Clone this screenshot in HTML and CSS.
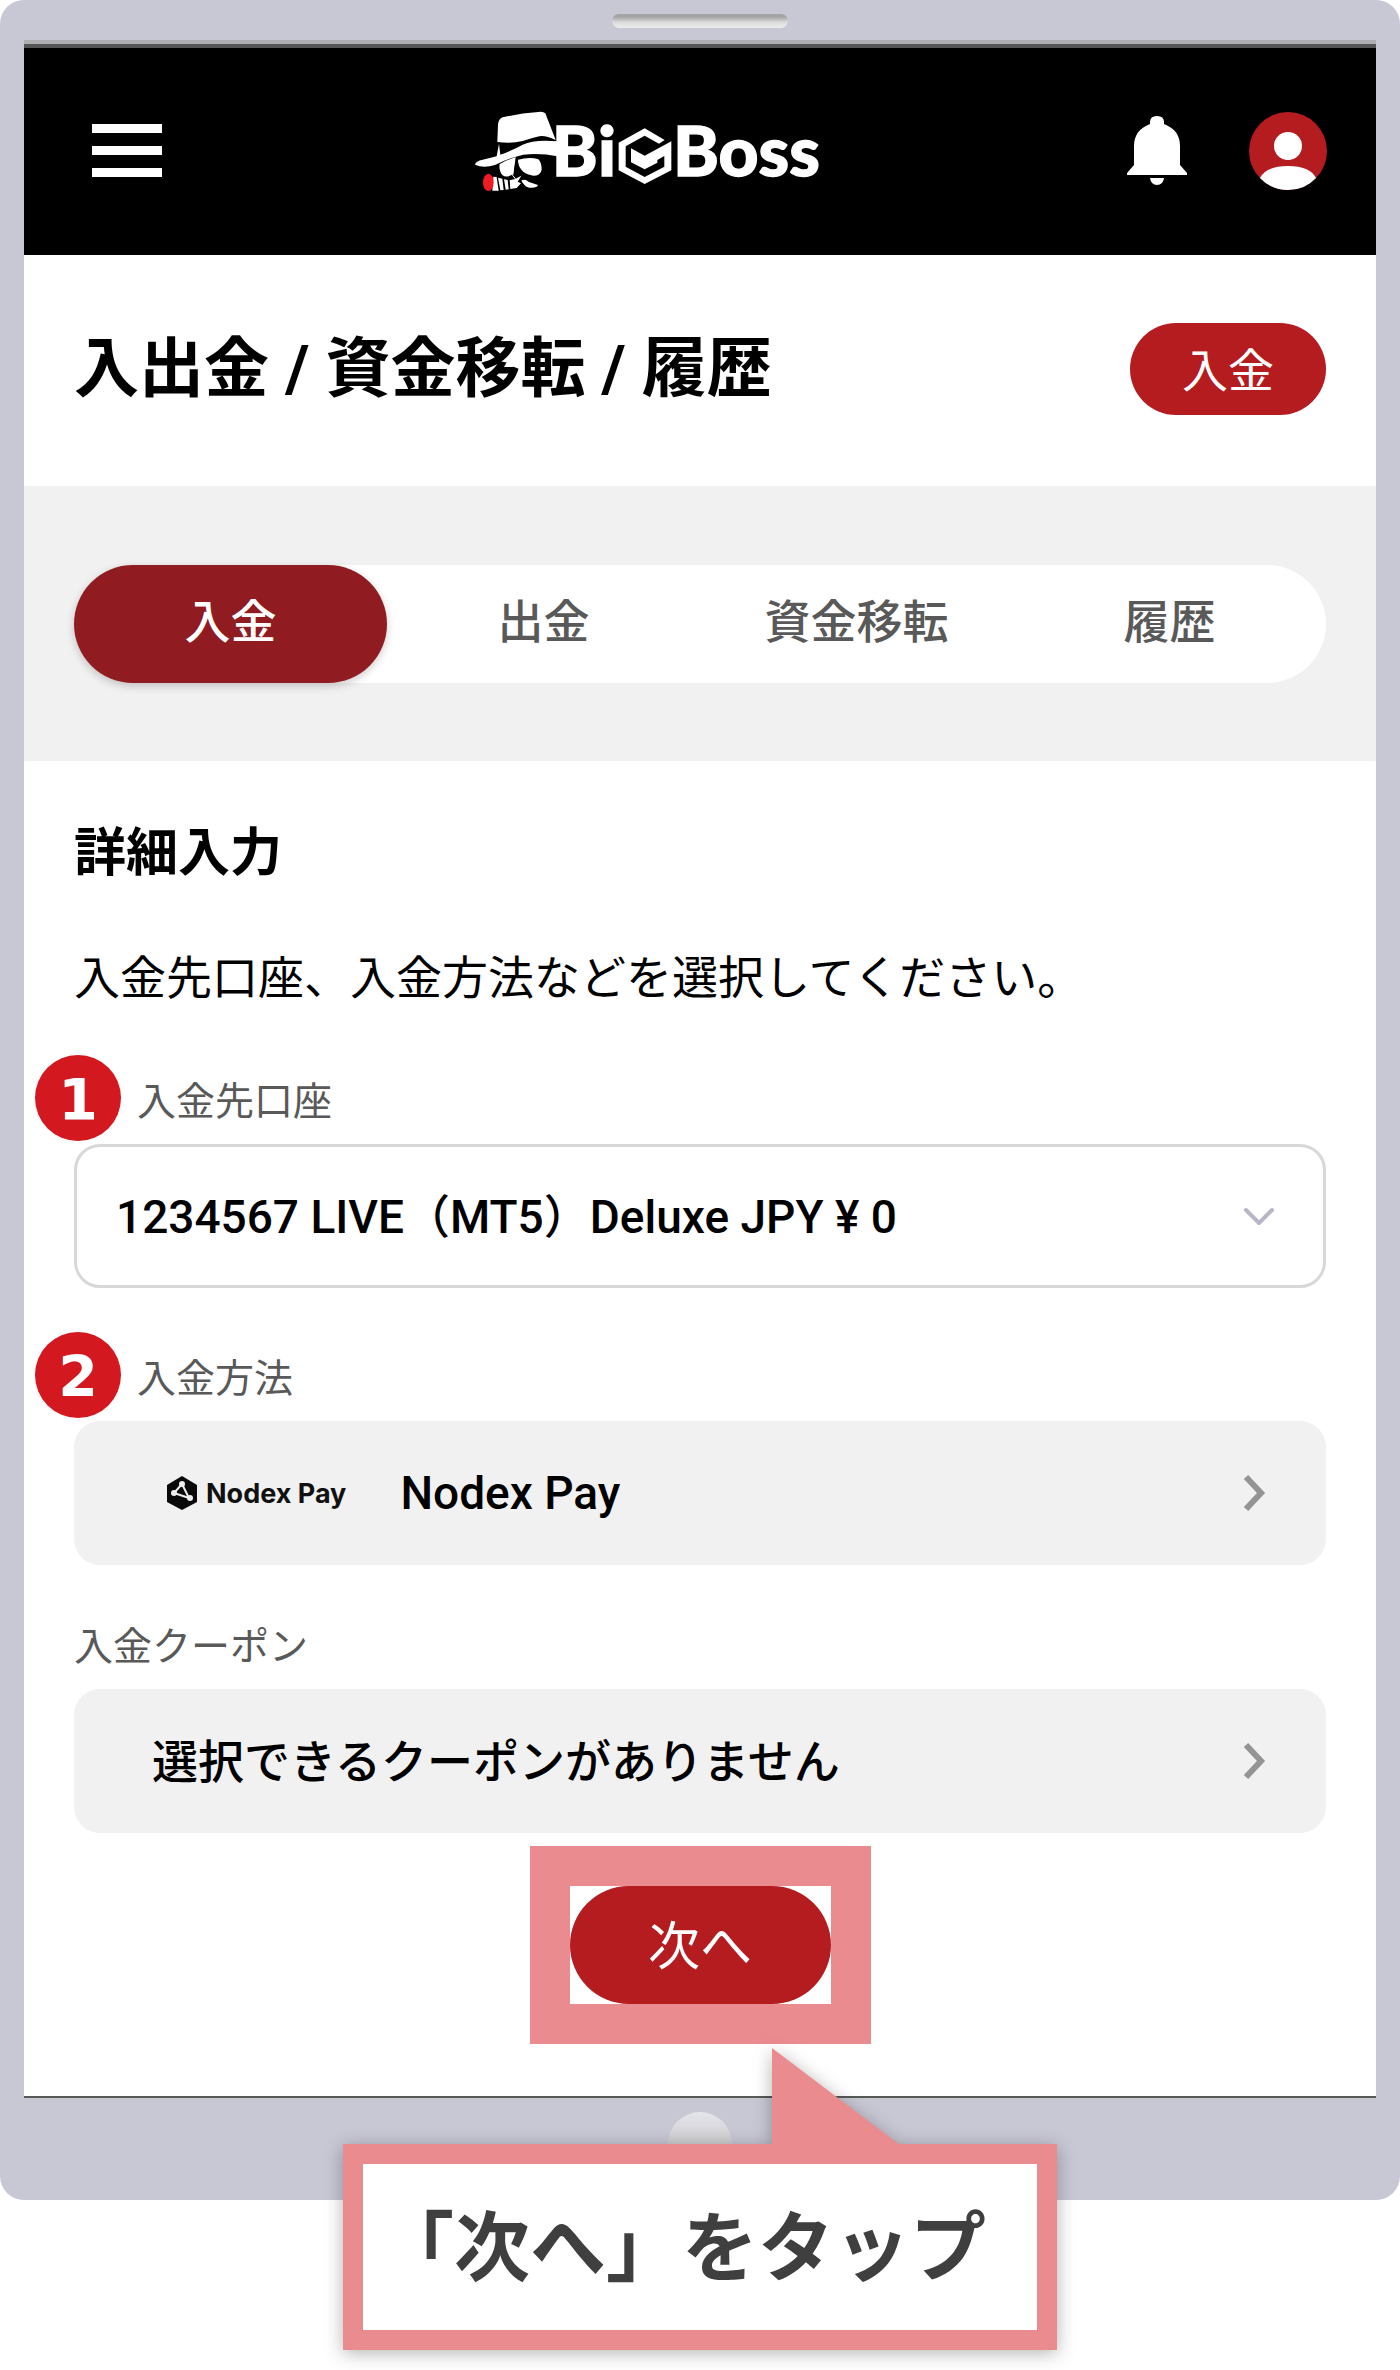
FILE: index.html
```html
<!DOCTYPE html>
<html lang="ja">
<head>
    <meta charset="UTF-8">
    <meta name="viewport" content="width=device-width, initial-scale=1.0">
    <title>入出金 / 資金移転 / 履歴</title>
    <link rel="stylesheet" href="styles.css">
</head>
<body>
    <div class="device">
        <div class="speaker"></div>
        <div class="screen">
            <header class="topbar">
                <button type="button" class="icon-button menu" aria-label="メニュー">
                    <span></span><span></span><span></span>
                </button>
                <a href="#" class="logo" aria-label="BigBoss">
                    <svg width="347" height="120" viewBox="45 0 1041 360">
                        <g fill="#fff">
                            <path d="M112 153 L114 100 Q116 84 128 79 Q180 67 235 63 Q250 61 256 67 L287 147 Q255 132 238 136 Q215 141 188 150 Q155 159 112 153Z"/>
                            <path d="M45 221 Q47 210 68 206 L110 196 L117 158 L121 191 Q160 177 188 161 Q225 144 292 151 L292 196 Q240 185 190 191 Q150 200 105 222 Q70 233 45 221Z"/>
                            <path d="M119 219 Q140 207 167 198 L160 248 Q140 263 127 252 Q116 240 119 219Z"/>
                            <path d="M174 206 Q210 196 235 205 Q245 214 245 236 Q242 254 220 254 Q194 251 183 235 Q174 223 174 206Z"/>
                            <path d="M100 257 L110 258 L116 299 L97 299Z M114 260 L127 263 L131 297 L121 298Z M132 265 L143 267 L146 295 L137 296Z M149 268 Q166 266 184 254 L173 272 L183 277 L170 291 L151 294Z"/>
                            <path d="M184 269 Q194 262 207 273 L234 282 Q231 292 208 290 Q194 287 184 269Z"/>
                            <path fill-rule="evenodd" d="M554 112 L614 147 L597 158 L554 134 L497 166 L497 227 L554 258 L613 227 L613 195 L592 207 L592 215 L554 235 L513 214 L513 172 L554 194 L634 151 L634 238 L554 279 L476 238 L476 155Z"/>
                        </g>
                        <path d="M163 203 L158 253 L168 266" fill="none" stroke="#fff" stroke-width="3"/>
                        <ellipse cx="85" cy="274" rx="16" ry="26" fill="#ed1c24"/>
                        <g class="logo-text">
                            <text x="275" y="255">B</text>
                            <text x="414" y="255">i</text>
                            <text x="639" y="255">Boss</text>
                        </g>
                    </svg>
                </a>
                <div class="topbar-actions">
                    <button type="button" class="icon-button" aria-label="お知らせ">
                        <svg width="60" height="70" viewBox="0 0 60 70" fill="#fff">
                            <path d="M23 9 V6 Q23 0 30 0 Q37 0 37 6 V8 Q53 14 53 30 V49 L60 57 V59 H0 V57 L7 49 V30 Q7 14 23 8Z"/>
                            <path d="M23 62 H37 Q36 69 30 69 Q24 69 23 62Z"/>
                        </svg>
                    </button>
                    <button type="button" class="icon-button" aria-label="アカウント">
                        <svg width="78" height="78" viewBox="0 0 78 78">
                            <circle cx="39" cy="39" r="39" fill="#b51c20"/>
                            <circle cx="39" cy="34" r="14" fill="#fff"/>
                            <path d="M11 66 Q17 54 39 54 Q61 54 67 66 Q56 78 39 78 Q22 78 11 66Z" fill="#fff"/>
                        </svg>
                    </button>
                </div>
            </header>

            <div class="page-head">
                <h1>入出金 / 資金移転 / 履歴</h1>
                <button type="button" class="pill small">入金</button>
            </div>

            <nav class="tab-area">
                <div class="tabs">
                    <button type="button" class="tab active">入金</button>
                    <button type="button" class="tab">出金</button>
                    <button type="button" class="tab">資金移転</button>
                    <button type="button" class="tab">履歴</button>
                </div>
            </nav>

            <form class="details">
                <h2>詳細入力</h2>
                <p>入金先口座、入金方法などを選択してください。</p>

                <div class="label-row">
                    <span class="badge">1</span>
                    <label for="account">入金先口座</label>
                </div>
                <div class="select-wrap">
                    <select id="account" class="field">
                        <option>1234567 LIVE（MT5）Deluxe JPY ¥ 0</option>
                    </select>
                    <svg class="select-arrow" width="32" height="20" viewBox="0 0 32 20">
                        <path d="M3 3 L16 16 L29 3" fill="none" stroke="#b8b6c6" stroke-width="4" stroke-linecap="round" stroke-linejoin="round"/>
                    </svg>
                </div>

                <div class="label-row">
                    <span class="badge">2</span>
                    <label for="method">入金方法</label>
                </div>
                <button type="button" id="method" class="field picker method">
                    <span class="pay-logo">
                        <svg width="32" height="34" viewBox="0 0 32 34">
                            <path d="M16 0 L31 9 V26 L16 34 L1 26 V9Z" fill="#0a0a0a"/>
                            <path d="M16 8 L8 17 L23 22Z" fill="none" stroke="#eee" stroke-width="2"/>
                            <circle cx="16" cy="8" r="3" fill="#eee"/>
                            <circle cx="8" cy="17" r="3" fill="#eee"/>
                            <circle cx="24" cy="22" r="3" fill="#eee"/>
                        </svg>
                        Nodex Pay
                    </span>
                    <span>Nodex Pay</span>
                    <svg class="arrow" width="24" height="40" viewBox="0 0 24 40">
                        <path d="M4 4 L19 20 L4 36" fill="none" stroke="#949494" stroke-width="6"/>
                    </svg>
                </button>

                <div class="label-row plain">
                    <label for="coupon">入金クーポン</label>
                </div>
                <button type="button" id="coupon" class="field picker">
                    <span class="note">選択できるクーポンがありません</span>
                    <svg class="arrow" width="24" height="40" viewBox="0 0 24 40">
                        <path d="M4 4 L19 20 L4 36" fill="none" stroke="#949494" stroke-width="6"/>
                    </svg>
                </button>

                <div class="highlight">
                    <button type="button" class="pill">次へ</button>
                </div>
            </form>
        </div>
        <div class="home"></div>
    </div>

    <div class="callout">「次へ」をタップ</div>
</body>
</html>
```

FILE: styles.css
```css
* {
    box-sizing: border-box;
}

body {
    margin: 0;
    padding-bottom: 20px;
    background-color: #fff;
    color: #000;
    font-family: Roboto, "Noto Sans CJK JP", sans-serif;
    font-size: 46px;
}

button, select {
    font-family: inherit;
    font-size: inherit;
    color: inherit;
    margin: 0;
    cursor: pointer;
}

/* tablet frame */
.device {
    background-color: #c8c7d4;
    border-radius: 24px;
    padding: 14px 24px 0;
}

.speaker {
    width: 176px;
    height: 14px;
    margin: 0 auto 12px;
    border-radius: 7px;
    background: linear-gradient(#a3a3a3 20%, #dcdcdc 60%, #ececec);
}

.screen {
    background-color: #fff;
    border-top: 4px solid #aeaeb2;
    border-bottom: 2px solid #565b58;
}

.home {
    width: 64px;
    height: 64px;
    margin: 14px auto 0;
    border-radius: 50%;
    background: linear-gradient(#e4e4ec, #cacaca 60%);
}

.device::after {
    content: "";
    display: block;
    height: 24px;
}

/* header */
.topbar {
    display: flex;
    justify-content: space-between;
    align-items: center;
    height: 211px;
    padding: 0 49px 2px 68px;
    background-color: #000;
    border-top: 4px solid #555;
}

.icon-button {
    padding: 0;
    border: none;
    background: none;
}

.icon-button svg, .logo svg {
    display: block;
}

.menu {
    display: flex;
    flex-direction: column;
    gap: 13px;
    width: 70px;
}

.menu span {
    height: 9px;
    background-color: #fff;
}

.logo {
    margin-left: 8px;
}

.logo-text {
    font-family: Lato, sans-serif;
    font-size: 208px;
    font-weight: 900;
    fill: #fff;
    stroke: #fff;
    stroke-width: 4px;
}

.topbar-actions {
    display: flex;
    align-items: center;
    gap: 62px;
}

/* page title */
.page-head {
    display: flex;
    justify-content: space-between;
    align-items: center;
    padding: 68px 50px 71px;
}

h1 {
    margin: 0;
    font-size: 65px;
    line-height: 92px;
    font-weight: 700;
}

.pill {
    display: block;
    width: 261px;
    height: 118px;
    padding: 0 0 5px;
    border: none;
    border-radius: 59px;
    background-color: #b51c20;
    color: #fff;
    font-size: 52px;
}

.pill.small {
    width: 196px;
    height: 92px;
    font-size: 46px;
}

/* tabs */
.tab-area {
    padding: 79px 50px 78px;
    background-color: #f1f1f1;
}

.tabs {
    display: flex;
    border-radius: 59px;
    background-color: #fff;
}

.tab {
    flex: 1;
    height: 118px;
    padding: 0 0 12px;
    border: none;
    border-radius: 59px;
    background: none;
    color: #595959;
    font-weight: 500;
}

.tab.active {
    background-color: #901c22;
    color: #fff;
    box-shadow: 0 3px 8px rgba(0, 0, 0, 0.2);
}

/* form */
.details {
    padding: 61px 50px 52px;
}

h2 {
    margin: 0 0 60px;
    font-size: 52px;
    line-height: 64px;
    font-weight: 700;
}

p {
    margin: 0 0 45px;
    line-height: 64px;
}

.label-row {
    display: flex;
    align-items: center;
    gap: 16px;
    height: 86px;
    margin: 44px 0 3px -39px;
    color: #595959;
    font-size: 39px;
}

.label-row.plain {
    height: 68px;
    margin: 44px 0 12px;
}

.badge {
    width: 86px;
    height: 86px;
    border-radius: 50%;
    background-color: #d4181f;
    color: #fff;
    font-family: "DejaVu Sans", sans-serif;
    font-size: 57px;
    font-weight: 700;
    line-height: 90px;
    text-align: center;
}

.field {
    display: block;
    width: 100%;
    height: 144px;
    border: 3px solid #d8d8d8;
    border-radius: 26px;
    background-color: #fff;
    font-weight: 500;
}

.select-wrap {
    position: relative;
}

select.field {
    appearance: none;
    padding: 2px 100px 0 39px;
}

.select-arrow {
    position: absolute;
    top: 63px;
    right: 51px;
    pointer-events: none;
}

.picker {
    display: flex;
    align-items: center;
    padding: 0 60px 0 78px;
    border: none;
    background-color: #f1f1f1;
}

.picker .arrow {
    margin-left: auto;
}

.picker .note {
    padding-bottom: 6px;
}

.method {
    padding-left: 92px;
    gap: 54px;
}

.pay-logo {
    display: flex;
    align-items: center;
    gap: 8px;
    font-family: Inter, sans-serif;
    font-size: 27px;
    font-weight: 700;
    color: #111;
}

.highlight {
    width: fit-content;
    margin: 13px auto 0;
    border: 40px solid #ea8b90;
}

/* callout over the bottom of the frame */
.callout {
    position: relative;
    width: 714px;
    max-width: 100%;
    margin: -56px auto 0;
    padding: 30px 36px 26px 0;
    border: 20px solid #ea8b90;
    background-color: #fff;
    color: #3f3f3f;
    font-size: 76px;
    font-weight: 700;
    line-height: 110px;
    text-align: center;
    filter: drop-shadow(0 3px 9px rgba(0, 0, 0, 0.3));
}

.callout::before {
    content: "";
    position: absolute;
    top: -116px;
    left: 409px;
    width: 128px;
    height: 97px;
    background-color: #ea8b90;
    clip-path: polygon(0 0, 100% 100%, 0 100%);
}
```
